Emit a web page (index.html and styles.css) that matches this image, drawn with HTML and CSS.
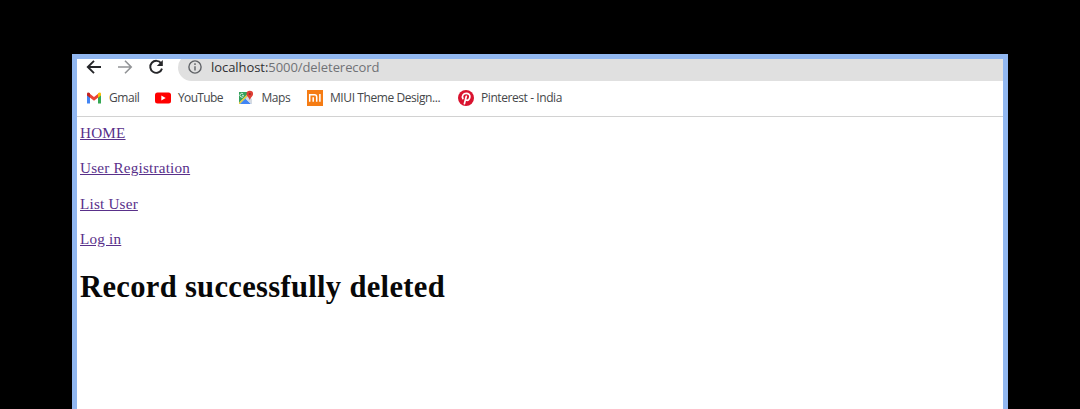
FILE: index.html
```html
<!DOCTYPE html>
<html lang="en">
<head>
<meta charset="utf-8">
<title>localhost:5000/deleterecord</title>
<link rel="stylesheet" href="styles.css">
</head>
<body>
<div class="window">
  <div class="toolbar">
    <svg class="nav back" width="16" height="16" viewBox="0 0 16 16"><path d="M15 8H2M8 1.8 1.8 8 8 14.2"/></svg>
    <svg class="nav forward" width="16" height="16" viewBox="0 0 16 16"><path d="M1 8h13M8 1.8 14.2 8 8 14.2"/></svg>
    <svg class="nav reload" width="16" height="16" viewBox="0 0 16 16"><path d="M13.2 4.4A6 6 0 1 0 14 9.600"/><path class="tip" d="M14.8 1v6H8.800z"/></svg>
    <div class="omnibox">
      <svg class="info" width="14" height="14" viewBox="0 0 14 14"><circle cx="7" cy="7" r="6.100"/><path d="M7 6.200v4.300M7 3.300v1.600"/></svg>
      <span class="url"><span class="host">localhost:</span>5000/deleterecord</span>
    </div>
  </div>
  <div class="bookmarks">
    <div class="bookmark gmail">
      <svg width="16" height="16" viewBox="0 0 16 16"><path fill="#4285f4" d="M1 4v9.500h3V7z"/><path fill="#34a853" d="M12 7v6.500h3V4z"/><path fill="#ea4335" d="M3.500 3.500 8 7l4.500-3.500V7.300L8 10.700 3.500 7.300z"/><path fill="#c5221f" d="M1 4c0-1.700 1.500-2 3-.8v4.500L1 5.500z"/><path fill="#fbbc04" d="M15 4c0-1.700-1.500-2-3-.8v4.500l3-2.200z"/></svg>
      <span>Gmail</span>
    </div>
    <div class="bookmark youtube">
      <svg width="16" height="16" viewBox="0 0 16 16"><rect y="2.500" width="16" height="11" rx="2.500" fill="#f00"/><path fill="#fff" d="m6.300 5.600 4.400 2.400-4.400 2.400z"/></svg>
      <span>YouTube</span>
    </div>
    <div class="bookmark maps">
      <svg width="16" height="16" viewBox="0 0 16 16"><path fill="#34a15c" d="M1 2h9v4L2 14H1z"/><path fill="#4285f4" d="m2 14 5.500-5.500L13 14z"/><path fill="#d5dbe3" d="M7.500 8.500 10 6l4 3v5h-1z"/><path fill="#fbd04b" d="m1 12.500 8-8L10 5.500 1.500 14H1z"/><path d="M5.700 5.500H4.200M5.500 6.200A1.900 1.900 0 1 1 5.200 4" fill="none" stroke="#fff" stroke-width=".8"/><path fill="#df3f35" d="M11.800.8a3.300 3.300 0 0 1 3.300 3.300c0 2.300-2.500 3.200-3.300 6-.8-2.800-3.300-3.700-3.300-6A3.300 3.300 0 0 1 11.800.8z"/><circle cx="11.800" cy="4" r="1.100" fill="#982b2b"/></svg>
      <span>Maps</span>
    </div>
    <div class="bookmark miui">
      <svg width="16" height="16" viewBox="0 0 16 16"><path fill="#f57c14" d="M0 0h16v16H0z"/><path fill="none" stroke="#fff" stroke-width="1.500" d="M2.700 11.800V4.700h4.800q2.200 0 2.200 2.200v4.900M6.200 7.200v4.600M12.900 4v7.800"/></svg>
      <span>MIUI Theme Design...</span>
    </div>
    <div class="bookmark pinterest">
      <svg width="16" height="16" viewBox="0 0 16 16"><circle cx="8" cy="8" r="8" fill="#d9132f"/><path fill="none" stroke="#fff" stroke-width="1.700" stroke-linecap="round" d="M4.900 8.600C3.500 5.700 5.500 3.300 8.200 3.300c2.500 0 3.900 1.600 3.700 3.600-.2 2.400-1.900 3.700-3.200 3.300-1-.3-1.200-1-1.200-1M8.300 6.300 6.400 13.700"/></svg>
      <span>Pinterest - India</span>
    </div>
  </div>
  <main class="page">
    <p><a href="#">HOME</a></p>
    <p><a href="#">User Registration</a></p>
    <p><a href="#">List User</a></p>
    <p><a href="#">Log in</a></p>
    <h1>Record successfully deleted</h1>
  </main>
</div>
</body>
</html>
```
FILE: styles.css
```css
* { box-sizing: border-box; }
body {
  margin: 0;
  height: 409px;
  padding: 54px 72px 0;
  background: #000;
  overflow: hidden;
}
.window {
  height: 355px;
  border: 5px solid #91b7f0;
  border-bottom: 0;
  background: #fff;
  overflow: hidden;
}
.toolbar {
  display: flex;
  align-items: flex-start;
  height: 22px;
  padding-left: 8.500px;
}
.nav {
  flex: none;
  fill: none;
  stroke: #252629;
  stroke-width: 1.9;
}
.back, .forward { margin-right: 15.300px; }
.forward { stroke: #929497; stroke-width: 1.6; }
.reload { margin-right: 13.900px; }
.reload .tip { fill: #252629; stroke: none; }
.omnibox {
  display: flex;
  align-items: center;
  flex: 1;
  height: 27px;
  margin-top: -5px;
  padding: 0 0 2px 10.500px;
  border-radius: 14px 0 0 14px;
  background: #e0e0e0;
}
.info { fill: none; stroke: #606367; stroke-width: 1.4; flex: none; }
.url {
  margin-left: 8.500px;
  font: 13px/20px "Open Sans", "Noto Sans", sans-serif;
  letter-spacing: -.06px;
  color: #707276;
  white-space: nowrap;
}
.host { color: #303134; }
.bookmarks {
  display: flex;
  align-items: center;
  height: 36px;
  padding: 0 0 1px 8.500px;
  border-bottom: 1px solid #d2d2d2;
}
.bookmark {
  display: flex;
  align-items: center;
  flex: none;
  gap: 7.500px;
  font: 12px/18px "Open Sans", "Noto Sans", sans-serif;
  letter-spacing: -.42px;
  color: #45474a;
  white-space: nowrap;
}
.bookmark svg { flex: none; }
.gmail { width: 69px; }
.youtube { width: 83.500px; letter-spacing: -.65px; }
.maps { width: 68.500px; }
.miui { width: 151px; }
.page {
  padding: 7px 3px;
  font-family: "Liberation Serif", "Times New Roman", serif;
}
.page p { margin: 0 0 17.300px; font-size: 15.200px; line-height: 18px; letter-spacing: .2px; }
.page a { color: #59308a; text-decoration: underline; }
.page h1 { margin: 0; padding-top: 5px; font-size: 30.600px; line-height: 34px; letter-spacing: .3px; color: #080808; white-space: nowrap; }
```
